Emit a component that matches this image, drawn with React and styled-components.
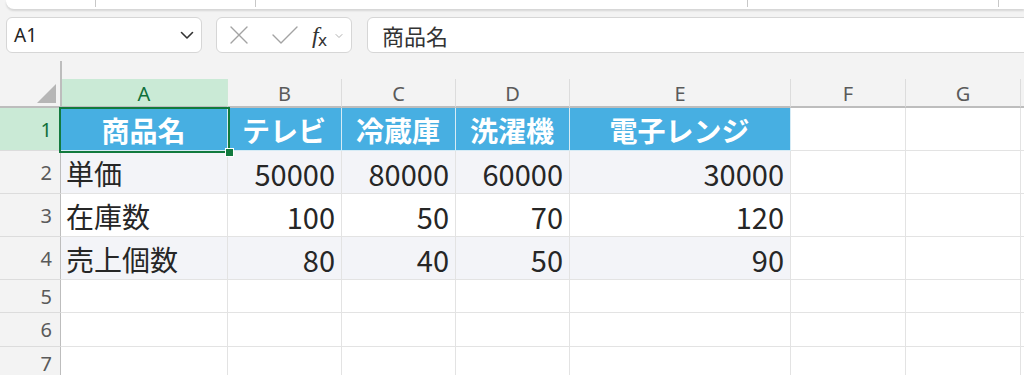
import React from "react";
import styled, { createGlobalStyle } from "styled-components";

const Global = createGlobalStyle`
  html, body { margin: 0; padding: 0; background: #f3f3f3; overflow: hidden; }
  body { font-family: "Noto Sans CJK JP", "Noto Sans", sans-serif; }
`;

const Page = styled.div`
  width: 1024px;
  height: 375px;
  overflow: hidden;
  background: #f3f3f3;
`;

const Ribbon = styled.div`
  margin-left: 6px;
  height: 9px;
  background: #fff;
  border-bottom-left-radius: 8px;
  box-shadow: 0 2px 2px rgba(0, 0, 0, 0.12);
  display: flex;
`;

const RibbonDivider = styled.span`
  width: 1px;
  height: 7px;
  background: #c8c8c8;
  margin-left: ${(p) => p.$at}px;
`;

const FormulaBar = styled.div`
  display: flex;
  align-items: stretch;
  height: 36px;
  margin-top: 8px;
  padding-left: 6px;
  gap: 14px;
`;

const Box = styled.div`
  background: #fff;
  border: 1px solid #d6d6d6;
  border-radius: 6px;
  box-sizing: border-box;
  display: flex;
  align-items: center;
`;

const NameBox = styled(Box)`
  width: 196px;
  padding: 0 7px 0 7px;
  justify-content: space-between;
  font-family: "Noto Sans", sans-serif;
  font-size: 19px;
  color: #242424;
`;

const FxBox = styled(Box)`
  width: 136px;
  padding: 0 0 0 12px;
  gap: 0;
`;

const FormulaInput = styled(Box)`
  flex: 1;
  margin-left: 1px;
  margin-right: -20px;
  padding-left: 14px;
  font-size: 22px;
  color: #333;
`;

const FxLabel = styled.span`
  font-family: "Liberation Serif", serif;
  font-style: italic;
  font-size: 24px;
  color: #333;
  margin-left: 13px;
  line-height: 1;
  display: flex;
  align-items: flex-end;
  & sub {
    font-size: 16px;
    font-style: normal;
    font-family: "DejaVu Sans", sans-serif;
    vertical-align: baseline;
    margin-left: -1px;
    position: relative;
    top: 2px;
  }
`;

const SheetArea = styled.div`
  margin-top: 8px;
`;

const Grid = styled.div`
  display: grid;
  grid-template-columns: 61px 167px 114px 114px 114px 221px 115px 115px 200px;
  grid-template-rows: 18px 29px 43px 43px 43px 43px 33px 34px 34px;
  position: relative;
`;

const Corner = styled.div`
  grid-row: 1 / span 2;
  grid-column: 1;
  border-right: 2px solid #bdbdbd;
  border-bottom: 2px solid #bdbdbd;
  box-sizing: border-box;
  position: relative;
  margin-right: -1px;
`;

const CornerTriangle = styled.div`
  position: absolute;
  right: 4px;
  bottom: 3px;
  width: 0;
  height: 0;
  border-left: 19px solid transparent;
  border-bottom: 19px solid #b6b6b6;
`;

const TopGap = styled.div`
  grid-row: 1;
  grid-column: 2 / span 8;
`;

const ColHead = styled.div`
  grid-row: 2;
  box-sizing: border-box;
  border-right: 1px solid ${(p) => (p.$sel ? "#cde9d6" : "#dcdcdc")};
  border-bottom: 2px solid #bdbdbd;
  background: ${(p) => (p.$sel ? "#caead6" : "#f3f3f3")};
  color: ${(p) => (p.$sel ? "#0f703b" : "#5a5a5a")};
  font-family: "Noto Sans", sans-serif;
  font-size: 20px;
  display: flex;
  align-items: center;
  justify-content: center;
  padding-top: 1px;
`;

const RowHead = styled.div`
  box-sizing: border-box;
  border-right: 2px solid #bdbdbd;
  border-bottom: 1px solid #dcdcdc;
  background: ${(p) => (p.$sel ? "#caead6" : "#f3f3f3")};
  color: ${(p) => (p.$sel ? "#0f703b" : "#5a5a5a")};
  font-family: "Noto Sans", sans-serif;
  font-size: 20px;
  display: flex;
  align-items: center;
  justify-content: flex-end;
  padding-right: 8px;
  margin-right: -1px;
`;

const Cell = styled.div`
  box-sizing: border-box;
  border-right: 1px solid ${(p) => (p.$head ? "#d6ebf5" : "#e3e3e3")};
  border-bottom: 1px solid ${(p) => (p.$head ? "#d6ebf5" : "#e3e3e3")};
  background: ${(p) => (p.$head ? "#47afe2" : p.$tint ? "#f3f4f8" : "#ffffff")};
  color: ${(p) => (p.$head ? "#ffffff" : "#262626")};
  font-weight: ${(p) => (p.$head ? 700 : 400)};
  font-size: ${(p) => (p.$num ? "29px" : "28px")};
  display: flex;
  align-items: center;
  justify-content: ${(p) =>
    p.$head ? "center" : p.$num ? "flex-end" : "flex-start"};
  padding: 0 6px 0 5px;
  white-space: nowrap;
  overflow: hidden;
  padding-top: 1px;
`;

const Selection = styled.div`
  position: absolute;
  left: 59px;
  top: 46px;
  width: 171px;
  height: 46px;
  border: 2px solid #127a3e;
  box-sizing: border-box;
  pointer-events: none;
`;

const Handle = styled.div`
  position: absolute;
  right: -6px;
  bottom: -6px;
  width: 7px;
  height: 7px;
  background: #127a3e;
  border: 1px solid #fff;
`;

const ChevronIcon = () => (
  <svg width="14" height="14" viewBox="0 0 14 14" fill="none">
    <path d="M1.5 4.5 L7 10 L12.5 4.5" stroke="#333" strokeWidth="1.6" strokeLinecap="round" strokeLinejoin="round" />
  </svg>
);

const CrossIcon = () => (
  <svg width="20" height="20" viewBox="0 0 20 20" fill="none">
    <path d="M2 2 L18 18 M18 2 L2 18" stroke="#a3a3a3" strokeWidth="1.4" strokeLinecap="round" />
  </svg>
);

const CheckIcon = () => (
  <svg width="28" height="20" viewBox="0 0 28 20" fill="none" style={{ marginLeft: 22 }}>
    <path d="M2 10 L10 18 L26 2" stroke="#a3a3a3" strokeWidth="1.4" strokeLinecap="round" strokeLinejoin="round" />
  </svg>
);

const SmallChevron = () => (
  <svg width="8" height="6" viewBox="0 0 8 6" fill="none" style={{ marginLeft: 8, marginTop: 2 }}>
    <path d="M1 1.5 L4 4.5 L7 1.5" stroke="#b0b0b0" strokeWidth="1" strokeLinecap="round" />
  </svg>
);

const cols = ["A", "B", "C", "D", "E", "F", "G", ""];

const data = [
  { head: true, cells: ["商品名", "テレビ", "冷蔵庫", "洗濯機", "電子レンジ"] },
  { tint: true, cells: ["単価", 50000, 80000, 60000, 30000] },
  { cells: ["在庫数", 100, 50, 70, 120] },
  { tint: true, cells: ["売上個数", 80, 40, 50, 90] },
  { cells: [] },
  { cells: [] },
  { cells: [] },
];

export default function App() {
  return (
    <Page>
      <Global />
      <Ribbon>
        <RibbonDivider $at={89} />
        <RibbonDivider $at={159} />
        <RibbonDivider $at={491} />
        <RibbonDivider $at={250} />
      </Ribbon>
      <FormulaBar>
        <NameBox>
          <span>A1</span>
          <ChevronIcon />
        </NameBox>
        <FxBox>
          <CrossIcon />
          <CheckIcon />
          <FxLabel>
            f<sub>x</sub>
          </FxLabel>
          <SmallChevron />
        </FxBox>
        <FormulaInput>商品名</FormulaInput>
      </FormulaBar>
      <SheetArea>
        <Grid>
          <Corner>
            <CornerTriangle />
          </Corner>
          <TopGap />
          {cols.map((c, i) => (
            <ColHead key={"h" + i} $sel={c === "A"}>
              {c}
            </ColHead>
          ))}
          {data.map((row, r) => (
            <React.Fragment key={r}>
              <RowHead $sel={r === 0}>{r + 1}</RowHead>
              {cols.map((_, ci) => {
                const v = row.cells[ci];
                const inTable = ci < 5 && row.cells.length > 0;
                return (
                  <Cell
                    key={ci}
                    $head={row.head && inTable}
                    $tint={row.tint && inTable}
                    $num={typeof v === "number"}
                  >
                    {v}
                  </Cell>
                );
              })}
            </React.Fragment>
          ))}
          <Selection>
            <Handle />
          </Selection>
        </Grid>
      </SheetArea>
    </Page>
  );
}
